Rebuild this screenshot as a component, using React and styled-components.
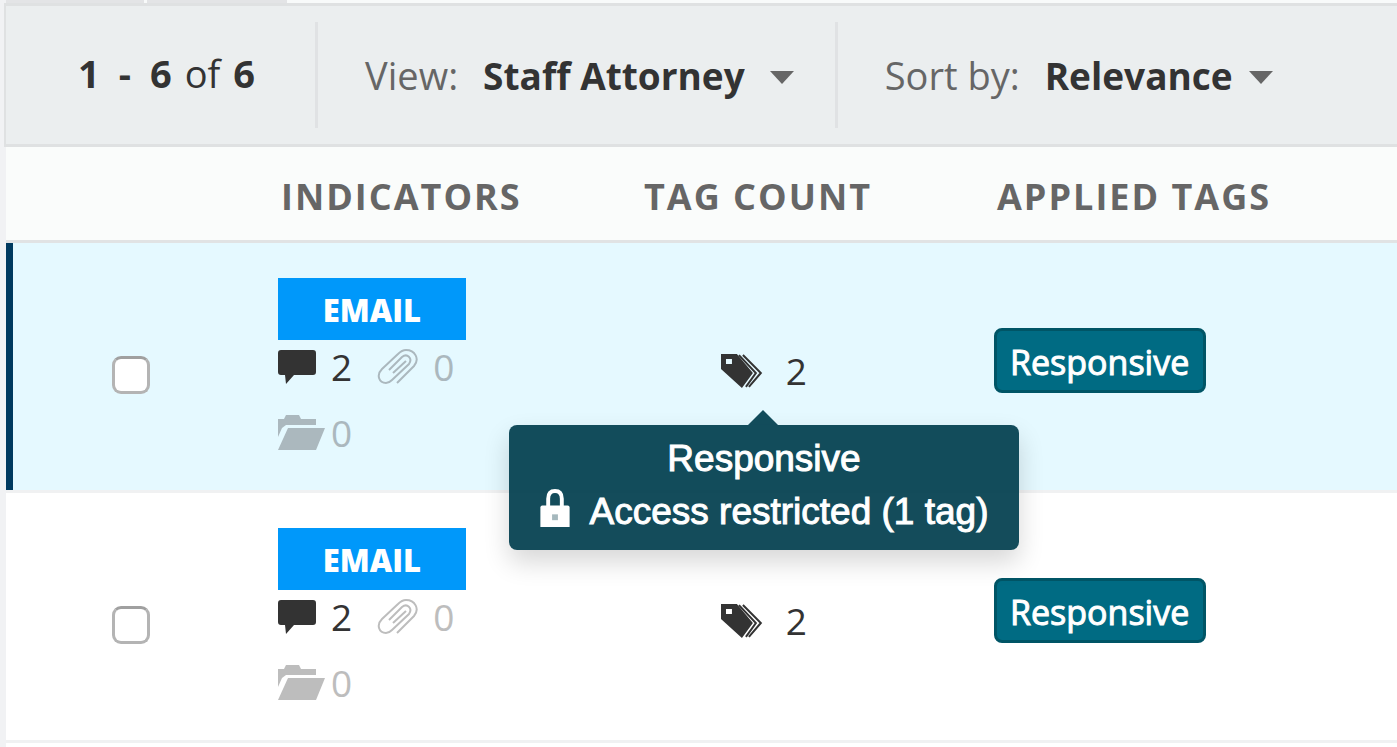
import React from 'react';
import styled, { createGlobalStyle } from 'styled-components';

const GlobalStyle = createGlobalStyle`
	* {
		box-sizing: border-box;
	}

	body {
		margin: 0;
		background: #fff;
		color: #333;
		font-family: 'Open Sans', sans-serif;
		font-size: 37px;
		overflow: hidden;
	}
`;

const Page = styled.main`
	min-height: 100vh;
	border-left: 6px solid #f1f2f4;
`;

const TabStrip = styled.nav`
	display: flex;
	gap: 3px;
	height: 3px;
	background: #f8fafa;
`;

const Tab = styled.span`
	width: ${props => props.$width}px;
	background: #e3e4e6;
`;

const Toolbar = styled.header`
	display: flex;
	align-items: center;
	height: 144px;
	margin-left: -2px;
	background: #ebeeef;
	border: solid #dfe1e2;
	border-width: 3px 0 3px 2px;
	white-space: nowrap;
`;

const ToolbarGroup = styled.div`
	display: flex;
	align-items: center;
	height: 106px;
	padding: 0 ${props => props.$right || 41}px 0 ${props => props.$left || 47}px;
	border-right: ${props => (props.$last ? 0 : 3)}px solid #e0e2e4;
`;

const Count = styled.p`
	display: flex;
	gap: 13px;
	margin: 0;
	padding-bottom: 4px;
	font-size: 38px;
`;

const Range = styled.b`
	display: flex;
	gap: 19px;
`;

const Label = styled.label`
	margin-right: 25px;
	color: #666;
	font-size: 38px;
`;

const Select = styled.select`
	appearance: none;
	field-sizing: content;
	margin: 0 ${props => props.$gap}px 0 0;
	padding: 0;
	border: 0;
	background: transparent;
	color: #333;
	font: inherit;
	font-weight: 700;
`;

const CaretDown = styled.svg`
	margin-top: 4px;
`;

const Table = styled.table`
	width: 100%;
	table-layout: fixed;
	border-collapse: collapse;
`;

const HeadCell = styled.th`
	width: ${props => (props.$width ? `${props.$width}px` : 'auto')};
	height: 94px;
	padding: 7px 0 0 3px;
	background: #fafcfb;
	border-bottom: 3px solid #e1e3e4;
	color: #666;
	font-size: 36px;
	letter-spacing: 2px;
	line-height: 48px;
	text-align: left;
	white-space: nowrap;
`;

const Row = styled.tr`
	height: 250px;
	background: ${props => (props.$active ? '#e5f9ff' : '#fff')};
	border-bottom: 3px solid #f0f1f2;
	color: ${props => (props.$active ? '#abb8be' : '#bdbdbd')};
`;

const Cell = styled.td`
	padding: ${props => props.$top || 0}px 0 0;
	vertical-align: top;
`;

const CheckCell = styled(Cell)`
	box-shadow: ${props => (props.$active ? 'inset 7px 0 #003a5f' : 'none')};
`;

const Checkbox = styled.input`
	appearance: none;
	display: block;
	width: 38px;
	height: 38px;
	margin: 0 0 0 106px;
	background: #fff;
	border: 3px solid #b4b4b4;
	border-top-color: #a0a0a0;
	border-radius: 9px;
`;

const TypeBadge = styled.div`
	width: 188px;
	height: 62px;
	background: #0098fa;
	color: #fff;
	font-size: 31px;
	font-weight: 800;
	line-height: 64px;
	text-align: center;
`;

const Indicators = styled.div`
	display: flex;
	flex-wrap: wrap;
	align-items: center;
	width: 210px;
	line-height: 66px;
	margin-top: -6px;
`;

const Indicator = styled.span`
	display: flex;
	align-items: center;
	gap: ${props => props.$gap}px;
	height: 66px;
	margin-right: 25px;
	color: ${props => (props.$filled ? '#333' : 'inherit')};
`;

const TagCount = styled.div`
	position: relative;
	display: flex;
	align-items: center;
	gap: 23px;
	width: 86px;
	margin-left: 80px;
	color: #333;
	line-height: 50px;
`;

const Tooltip = styled.div`
	position: absolute;
	top: 79px;
	left: 50%;
	z-index: 1;
	width: 510px;
	height: 125px;
	padding: 7px 24px;
	transform: translateX(-50%);
	background: rgba(0, 61, 77, 0.92);
	border-radius: 8px;
	box-shadow: 0 12px 26px rgba(0, 0, 0, 0.16);
	color: #fff;
	font-family: 'Liberation Sans', sans-serif;
	font-size: 37px;
	line-height: 53px;
	text-align: center;
	white-space: nowrap;
	-webkit-text-stroke: 1px #fff;

	&::before {
		content: '';
		position: absolute;
		bottom: 100%;
		left: 50%;
		margin-left: -16px;
		border: solid transparent;
		border-width: 0 15px 15px;
		border-bottom-color: rgba(0, 61, 77, 0.92);
	}
`;

const TooltipLine = styled.div`
	display: flex;
	align-items: center;
	justify-content: center;
	gap: 20px;
`;

const Lock = styled.svg`
	margin-bottom: 7px;
`;

const Tag = styled.span`
	display: inline-block;
	height: 65px;
	padding: 0 14px 0 13px;
	background: #006b83;
	border: 3px solid #005566;
	border-radius: 8px;
	color: #fff;
	font-size: 34px;
	line-height: 62px;
	-webkit-text-stroke: 1px #fff;
`;

const Caret = () => (
	<CaretDown width="24" height="13" viewBox="0 0 24 13" aria-hidden="true">
		<path d="M0 0h24L12 13z" fill="#666" />
	</CaretDown>
);

const CommentIcon = () => (
	<svg width="38" height="36" viewBox="0 0 38 36" fill="currentColor">
		<path d="M3 1h32q3 0 3 3v19q0 3-3 3H16l-8 9-1-9H3q-3 0-3-3V4q0-3 3-3z" />
	</svg>
);

const ClipIcon = () => (
	<svg width="42" height="38" viewBox="0 0 42 38" fill="none" stroke="currentColor" strokeWidth="2">
		<path d="M20 35L37 18C43 11 38 2 29 2Q25 2 21 6L5 21C-1 27 2 35 9 35Q12 35 15 32L32 16C36 10 30 5 25 9L12 22" />
		<path d="M16 25L29 13" />
	</svg>
);

const FolderIcon = () => (
	<svg width="47" height="36" viewBox="0 0 47 36" fill="currentColor">
		<path d="M0 4h6l2-4h13l2 4h15v6H8L4 13 0 22z" />
		<path d="M10 13h37l-9 22H0z" />
	</svg>
);

const TagsIcon = () => (
	<svg width="42" height="34" viewBox="0 0 42 34" fill="none">
		<path d="M0 0h16l16 19-11 15L0 15zM5 5v5h6V5z" fill="currentColor" fillRule="evenodd" />
		<path d="M18 1l17 18-10 14M22 1l18 18-12 14" stroke="currentColor" strokeWidth="2" />
	</svg>
);

const LockIcon = () => (
	<Lock width="30" height="38" viewBox="0 0 30 39" fill="none">
		<path d="M8 18v-8q0-8 7-8t7 8v8" stroke="#fff" strokeWidth="4" />
		<path d="M2 17h26q2 0 2 2v20H0V19q0-2 2-2z" fill="#fff" />
		<path d="M12 26h6v6h-6z" fill="#a5b8bd" />
	</Lock>
);

const documents = [
	{ id: 1, type: 'EMAIL', comments: 2, attachments: 0, folders: 0, tags: 2, applied: 'Responsive', active: true },
	{ id: 2, type: 'EMAIL', comments: 2, attachments: 0, folders: 0, tags: 2, applied: 'Responsive', active: false }
];

const DocumentRow = ({ doc }) => (
	<Row $active={ doc.active }>
		<CheckCell $top={ 113 } $active={ doc.active }>
			<Checkbox type="checkbox" aria-label={ `Select document ${doc.id}` } />
		</CheckCell>
		<Cell $top={ 35 }>
			<TypeBadge>{ doc.type }</TypeBadge>
			<Indicators>
				<Indicator $gap={ 15 } $filled><CommentIcon />{ doc.comments }</Indicator>
				<Indicator $gap={ 14 }><ClipIcon />{ doc.attachments }</Indicator>
				<Indicator $gap={ 6 }><FolderIcon />{ doc.folders }</Indicator>
			</Indicators>
		</Cell>
		<Cell $top={ 103 }>
			<TagCount>
				<TagsIcon />{ doc.tags }
				{ doc.active && (
					<Tooltip role="tooltip">
						<div>{ doc.applied }</div>
						<TooltipLine><LockIcon />Access restricted (1 tag)</TooltipLine>
					</Tooltip>
				) }
			</TagCount>
		</Cell>
		<Cell $top={ 85 }>
			<Tag>{ doc.applied }</Tag>
		</Cell>
	</Row>
);

const App = () => (
	<Page>
		<GlobalStyle />
		<TabStrip>
			<Tab $width={ 138 } />
			<Tab $width={ 140 } />
		</TabStrip>
		<Toolbar>
			<ToolbarGroup $left={ 72 } $right={ 60 }>
				<Count>
					<Range><span>1</span><span>-</span><span>6</span></Range>
					<span>of</span>
					<b>6</b>
				</Count>
			</ToolbarGroup>
			<ToolbarGroup>
				<Label htmlFor="view">View:</Label>
				<Select id="view" $gap={ 25 }>
					<option>Staff Attorney</option>
				</Select>
				<Caret />
			</ToolbarGroup>
			<ToolbarGroup $last>
				<Label htmlFor="sort">Sort by:</Label>
				<Select id="sort" $gap={ 16 }>
					<option>Relevance</option>
				</Select>
				<Caret />
			</ToolbarGroup>
		</Toolbar>
		<Table>
			<thead>
				<tr>
					<HeadCell $width={ 272 } aria-label="Select" />
					<HeadCell $width={ 363 }>INDICATORS</HeadCell>
					<HeadCell $width={ 353 }>TAG COUNT</HeadCell>
					<HeadCell>APPLIED TAGS</HeadCell>
				</tr>
			</thead>
			<tbody>
				{ documents.map(doc => <DocumentRow key={ doc.id } doc={ doc } />) }
			</tbody>
		</Table>
	</Page>
);

export default App;
